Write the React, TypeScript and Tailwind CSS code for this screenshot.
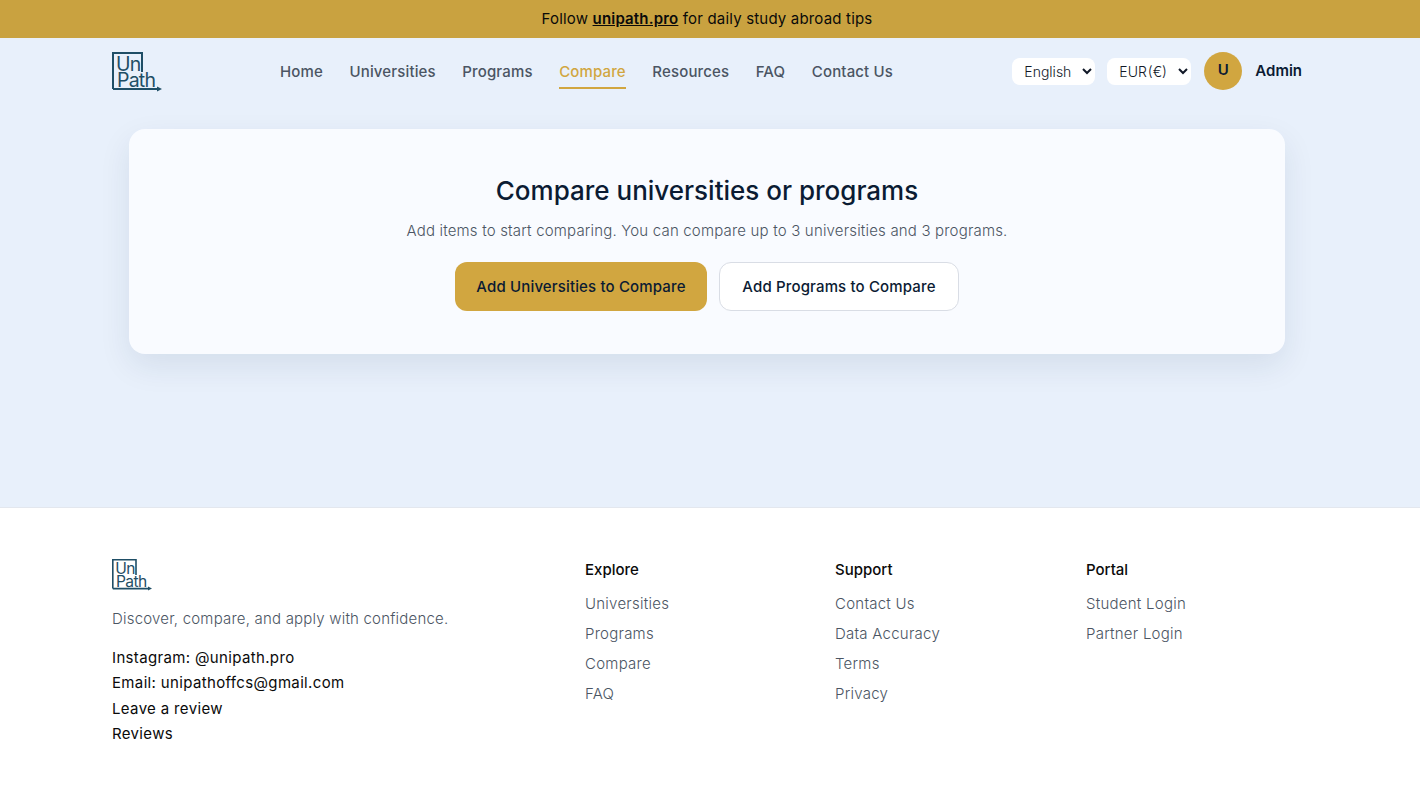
import { useState } from 'react';

const navLinks = ['Home', 'Universities', 'Programs', 'Compare', 'Resources', 'FAQ', 'Contact Us'];

const footerCols = [
  { title: 'Explore', links: ['Universities', 'Programs', 'Compare', 'FAQ'], width: 'w-[250px]' },
  { title: 'Support', links: ['Contact Us', 'Data Accuracy', 'Terms', 'Privacy'], width: 'w-[251px]' },
  { title: 'Portal', links: ['Student Login', 'Partner Login'], width: 'w-[216px]' },
];

function Logo({ width }: { width: number }) {
  return (
    <svg width={width} viewBox="0 0 50 40" className="block">
      <path d="M1 37V1h29v19" fill="none" stroke="#1f4e66" strokeWidth="2" />
      <path d="M1 37h45" fill="none" stroke="#1f4e66" strokeWidth="2" />
      <path d="M45 34.5l5 2.5-5 2.5z" fill="#1f4e66" />
      <text x="4" y="19" fontSize="19.5" fill="#1f4e66" fontFamily="Inter, sans-serif" letterSpacing="-0.8">Un</text>
      <text x="5" y="35" fontSize="19.5" fill="#1f4e66" fontFamily="Inter, sans-serif" letterSpacing="-0.8">Path</text>
    </svg>
  );
}

export default function App() {
  const [lang, setLang] = useState('English');
  const [currency, setCurrency] = useState('EUR');

  return (
    <div className="min-h-[790px] bg-white font-['Inter',sans-serif] text-[#0b1b33]">
      <div className="flex h-[38px] items-center justify-center bg-[#c9a240] pr-[6px] text-[15px] tracking-[0.18px] text-[#0a0a0a]">
        <p>
          Follow <a className="font-semibold underline">unipath.pro</a> for daily study abroad tips
        </p>
      </div>

      <main className="h-[469px] bg-[#e8f0fb] pr-[6px]">
        <header className="mx-auto flex h-[67px] w-[1190px] items-center">
          <Logo width={50} />
          <nav className="ml-[118px] flex gap-[26.5px] text-[15px] font-medium tracking-[0.15px] text-[#4b5563]">
            {navLinks.map((l) => (
              <a
                key={l}
                className={l === 'Compare' ? 'border-b-2 border-[#d1a640] pt-[7px] pb-[4px] text-[#d1a640]' : 'border-b-2 border-transparent pt-[7px] pb-[4px]'}
              >
                {l}
              </a>
            ))}
          </nav>
          <div className="ml-auto flex items-center">
            <select
              value={lang}
              onChange={(e) => setLang(e.target.value)}
              className="h-[27px] w-[83px] rounded-lg bg-white pl-2 text-[14px] font-light text-[#111827]"
            >
              <option>English</option>
            </select>
            <select
              value={currency}
              onChange={(e) => setCurrency(e.target.value)}
              className="ml-3 h-[27px] w-[84px] rounded-lg bg-white pl-2 text-[14px] font-light text-[#111827] [word-spacing:-3px]"
            >
              <option value="EUR">EUR (€)</option>
            </select>
            <span className="mb-[2px] ml-[13px] flex h-[38px] w-[38px] items-center justify-center rounded-full bg-[#d1a640] text-[15px] font-semibold">U</span>
            <span className="ml-[13px] text-[15px] font-semibold">Admin</span>
          </div>
        </header>

        <section className="mx-auto mt-6 flex h-[225px] w-[1156px] flex-col items-center rounded-2xl bg-[#f9fbff] pt-[43px] shadow-[0_12px_32px_rgba(15,40,80,0.09)]">
          <h1 className="text-[26px] leading-[38px] font-medium">Compare universities or programs</h1>
          <p className="mt-[9px] text-[15px] leading-[24px] font-light tracking-[0.18px] text-[#4b5563]">
            Add items to start comparing. You can compare up to 3 universities and 3 programs.
          </p>
          <div className="mt-[19px] flex gap-3">
            <button className="h-[49px] w-[252px] rounded-xl bg-[#d1a640] pt-[2px] text-[15px] font-medium tracking-[0.15px]">Add Universities to Compare</button>
            <button className="h-[49px] w-[240px] rounded-xl border border-[#d9dde5] bg-white pt-[2px] text-[15px] font-medium tracking-[0.15px]">Add Programs to Compare</button>
          </div>
        </section>
      </main>

      <footer className="border-t border-[#e3e7ee] bg-white pr-[6px]">
        <div className="mx-auto flex w-[1190px] pt-[51px]">
          <div className="w-[473px]">
            <Logo width={40} />
            <p className="mt-[16px] text-[15px] leading-[24px] font-light tracking-[0.2px] text-[#4b5563]">Discover, compare, and apply with confidence.</p>
            <ul className="mt-[14px] text-[15px] leading-[25.3px] font-normal tracking-[0.35px] text-[#0a0a0a]">
              <li>Instagram: @unipath.pro</li>
              <li>Email: unipathoffcs@gmail.com</li>
              <li>Leave a review</li>
              <li>Reviews</li>
            </ul>
          </div>
          {footerCols.map((c) => (
            <div key={c.title} className={c.width}>
              <h3 className="text-[15px] leading-[22px] font-medium text-[#0a0a0a]">{c.title}</h3>
              <ul className="mt-[8px] text-[15px] leading-[30px] font-light tracking-[0.25px] text-[#4b5563]">
                {c.links.map((l) => (
                  <li key={l}>{l}</li>
                ))}
              </ul>
            </div>
          ))}
        </div>
      </footer>
    </div>
  );
}
